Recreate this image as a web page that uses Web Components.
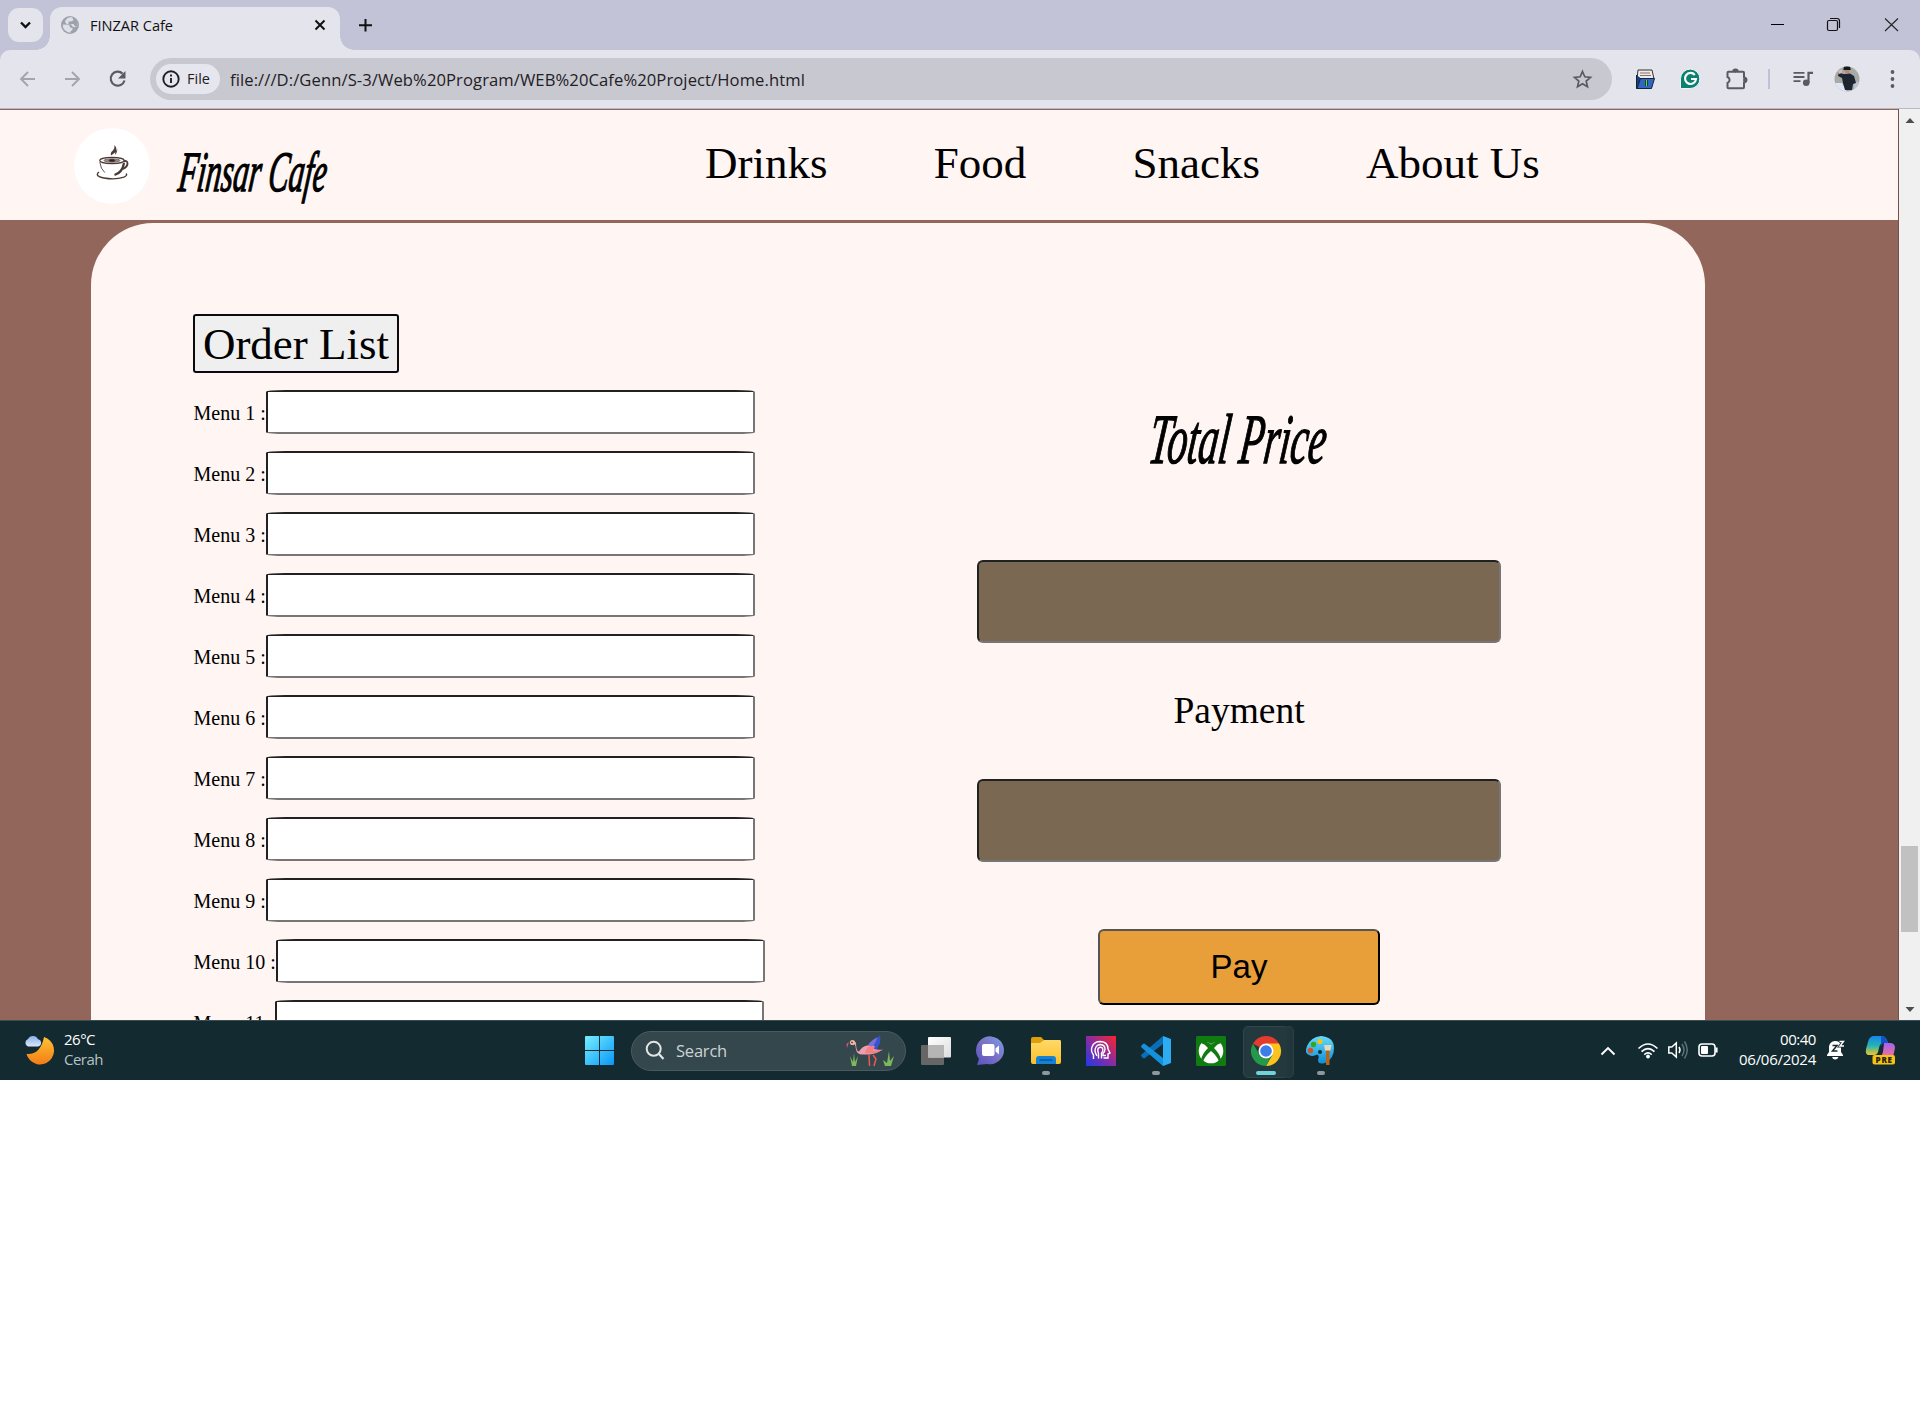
<!DOCTYPE html>
<html lang="id">
<head>
<meta charset="utf-8">
<title>FINZAR Cafe</title>
<style>
html,body{margin:0;background:#fff}
body{width:1920px;height:1411px;overflow:hidden;font-family:"Open Sans","Noto Sans",sans-serif}
</style>
</head>
<body>
<desk-screen></desk-screen>
<script>
const define=(name,css,html,ready)=>customElements.define(name,class extends HTMLElement{
  connectedCallback(){
    if(this.shadowRoot)return;
    const r=this.attachShadow({mode:'open'});
    r.innerHTML=`<style>:host{display:block;box-sizing:border-box}*{box-sizing:border-box}svg{display:block;flex:none;overflow:visible}${css}</style>${typeof html==='function'?html(this):html}`;
    if(ready)ready(this,r);
  }
});
// Icon with a viewBox in screen coordinates
const ic=(x,y,w,h,body,ml=0)=>`<svg width="${w}" height="${h}" viewBox="${x} ${y} ${w} ${h}" style="margin-left:${ml}px" fill="none">${body}</svg>`;

// Single line of text tracked to a given width
define('fit-text',`:host{display:block;flex:none;white-space:nowrap;width:var(--w)}span{display:inline-block}`,
  `<span><slot></slot></span>`,(el,r)=>{
    const w=+el.getAttribute('w'),s=r.querySelector('span');
    el.style.setProperty('--w',w+'px');
    const n=el.textContent.length,nat=s.getBoundingClientRect().width;
    s.style.letterSpacing=((w-nat)/n)+'px';
  });

define('script-title',`text{font-family:"Liberation Serif",serif;font-style:italic;font-weight:400;fill:#000;stroke:#000;stroke-width:1.3px}`,el=>{
  const w=+el.getAttribute('w'),h=+el.getAttribute('cap'),t=el.getAttribute('label');
  const fs=h/0.665;
  return `<svg width="${w}" height="${h}"><text transform="translate(0 ${h}) skewX(-7)" x="3" y="0" font-size="${fs}" textLength="${w-6}" lengthAdjust="spacingAndGlyphs">${t}</text></svg>`;
});

define('tab-strip',`
:host{height:50px;background:#c3c3d7;display:flex;align-items:flex-start;font-size:14.6px;color:#111}
.drop{margin:8px 0 0 8px;width:35px;height:34px;border-radius:11px;background:#e4e4ed}
.tab{position:relative;margin:7px 0 0 7px;width:290px;height:43px;background:#e4e4ed;border-radius:12px 12px 0 0;display:flex;align-items:center;padding-left:11px}
.tab:before,.tab:after{content:"";position:absolute;bottom:0;width:14px;height:14px}
.tab:before{left:-14px;background:radial-gradient(circle at 0 0,transparent 13.5px,#e4e4ed 14px)}
.tab:after{right:-14px;background:radial-gradient(circle at 100% 0,transparent 13.5px,#e4e4ed 14px)}
fit-text{margin:-7px 0 0 11px}.tab svg{margin-top:-7px}`,
`<div class="drop">${ic(8,8,35,34,'<path d="M21 22.5l4.5 4.5 4.5-4.5" stroke="#111" stroke-width="2.4"/>')}</div>
<div class="tab">${ic(61,16,18,18,'<circle cx="70" cy="25" r="9" fill="#9ba2ab"/><path d="M62.800 24.500l5 .3q2.500.5 2.500 3h2.200v2l-2 1.700v1.200a7.600 7.600 0 0 1-7.700-8.200M69 17.500q1.500-.6 3.200-.2l1.300 3-2.500 1.200h-2.500v2.500h5l1.500 2.500 2.500-.5q.3-2.500-1-4.800a8 8 0 0 1 .6 5q-2.600 1.800-4.600.3l-1.500-2.300h-4l-2-2.200q.5-3 4-4.500z" fill="#dedfe7"/>')}
<fit-text w="83">FINZAR Cafe</fit-text>${ic(315,20,10,10,'<path d="M315.500 20.500l9 9m0-9l-9 9" stroke="#111" stroke-width="2"/>',142)}</div>
${ic(352,0,500,50,'<path d="M365.500 19v12.500M359 25.300h13" stroke="#111" stroke-width="2"/>',12)}
${ic(1771,0,149,50,'<path d="M1771 24.500h13" stroke="#000"/><rect x="1827.500" y="20.500" width="10" height="10" rx="1.500" stroke="#111" stroke-width="1.200"/><path d="M1830 18.500h7a2.500 2.500 0 0 1 2.500 2.500v7" stroke="#111" stroke-width="1.200"/><path d="M1885 18.500l13 12.500m0-12.500l-13 12.500" stroke="#222" stroke-width="1.100"/>',919)}`);

define('tool-bar',`
:host{height:59px;background:#c3c3d7;color:#1f2023}
.bar{height:59px;background:#e4e4ed;border-radius:10px 10px 0 0;border-bottom:1px solid #b9b9c6;display:flex;align-items:center}
.omni{width:1462px;height:42px;border-radius:21px;background:#c8c8d1;display:flex;align-items:center;margin-left:24px;padding-left:6px}
.chip{width:64px;height:30px;border-radius:15px;background:#e6e6ef;display:flex;align-items:center;padding-left:6px}
.chip fit-text{font-size:14.5px;margin:-1px 0 0 7px}
.url{font-size:16.600px;margin-left:10px}`,
`<div class="bar">
${ic(20,71,15,16,'<path d="M35 79H21.500M28 72l-7 7 7 7" stroke="#a4a4ad" stroke-width="1.900"/>',20)}
${ic(65,71,15,16,'<path d="M65 79h13.500M72 72l7 7-7 7" stroke="#a4a4ad" stroke-width="1.900"/>',30)}
${ic(110,71,16,16,'<path d="M122.600 73.600a7 7 0 1 0 1.900 6.900" stroke="#5a5b60" stroke-width="2.200"/><path d="M125.500 71v7.500H118z" fill="#5a5b60"/>',30)}
<div class="omni"><div class="chip">${ic(162,70,18,18,'<circle cx="171" cy="79" r="7.700" stroke="#1f2023" stroke-width="1.900"/><path d="M171 78v5M171 74.500v2" stroke="#1f2023" stroke-width="1.900"/>')}<fit-text w="23">File</fit-text></div>
<fit-text class="url" w="575">file:///D:/Genn/S-3/Web%20Program/WEB%20Cafe%20Project/Home.html</fit-text>
${ic(1573,70,19,19,'<path d="M1582.500 71.500l2.300 5.300 5.700.5-4.300 3.800 1.300 5.600-5-3-5 3 1.300-5.600-4.300-3.800 5.700-.5z" stroke="#5a5b60" stroke-width="1.700"/>',768)}</div>
${ic(1635,69,20,21,'<path d="M1638 70h14l2 9h-17z" fill="#f3e9e5" stroke="#333"/><path d="M1640 73h10M1640 75.500h11" stroke="#777"/><path d="M1636.500 75v13.500h14l1-2" fill="#173f7c" stroke="#123"/><path d="M1640.500 78.500h14l-3 10h-14.500z" fill="#2e67bd" stroke="#14243c"/><path d="M1646.500 80v6" stroke="#0d1c22" stroke-width="3"/><path d="M1646.500 80v6" stroke="#5ddf63" stroke-width="1.400"/>',23)}
${ic(1680,70,20,20,'<path d="M1680.500 89.500v-10a9.700 9.700 0 1 1 9.700 10z" fill="#0b8270" stroke="#f4f4f8"/><path d="M1694.800 76a5.500 5.500 0 1 0 1.200 4h-5" stroke="#fff" stroke-width="2.200"/>',25)}
${ic(1726,68,21,21,'<path d="M1728.500 70.700h4.700a2.300 2.300 0 0 1 4.600 0h5.200q1 0 1 1v4.800a2.500 2.500 0 0 1 0 5v4.800q0 1-1 1h-14.500q-1 0-1-1v-4.300a3.200 3.200 0 0 0 0-6v-4.300q0-1 1-1z" stroke="#5a5b60" stroke-width="2"/><circle cx="1735.500" cy="70" r="2" fill="#5a5b60"/><circle cx="1745" cy="79" r="2" fill="#5a5b60"/>',26)}
${ic(1768,69,2,20,'<path d="M1769 69v20" stroke="#c0c0d6" stroke-width="2"/>',21)}
${ic(1793,70,20,17,'<path d="M1793.500 71.800h11M1793.500 76h11M1793.500 80.200h7" stroke="#5a5b60" stroke-width="1.800"/><circle cx="1806.200" cy="81.700" r="3.300" fill="#5a5b60"/><path d="M1808.500 82V71.800h4.500" stroke="#5a5b60" stroke-width="2.200"/>',23)}
${ic(1834,66,26,26,'<clipPath id="av"><circle cx="1847" cy="79" r="12.500"/></clipPath><g clip-path="url(#av)"><path d="M1834 66h26v26h-26z" fill="#a7aaa7"/><path d="M1834 83h8l5 9h-13z" fill="#dde6f2"/><path d="M1854 82h6v10h-6z" fill="#b9c4d4"/><path d="M1844 66h6l.8 4h-7.500z" fill="#171a1c"/><path d="M1844.500 70h5v3.500h-4z" fill="#b58b7a"/><path d="M1839 72l4 2 3 0 4-.5 4 2.500 2 7-3 1-1 6h-7l-2-7-1-5-4-2z" fill="#1d2630"/><path d="M1838 71l4-1.500v3.500l-3 1z" fill="#dbb9ae"/></g>',21)}
${ic(1890,69,6,20,'<g fill="#5a5b60"><circle cx="1892.500" cy="72" r="1.900"/><circle cx="1892.500" cy="79" r="1.900"/><circle cx="1892.500" cy="86" r="1.900"/></g>',30)}
</div>`);

define('site-header',`
:host{height:111px;background:#fff5f2;border-top:1px solid #92665a;display:flex;font:45px/52px "Liberation Serif",serif;color:#000}
.logo{margin:18px 0 0 74px;width:76px;height:76px;border-radius:50%;background:#fff}
script-title{margin:43px 0 0 24px}
nav{display:flex;gap:106.200px;margin:27px 0 0 377px}`,
`<div class="logo">${ic(74,128,76,76,`<g stroke="#4b3b38"><ellipse cx="112" cy="160.500" rx="12.300" ry="3.100" stroke-width="1.200"/><ellipse cx="112" cy="160.500" rx="8" ry="1.800" fill="#9b8d88" stroke-width=".6"/><ellipse cx="112" cy="160.500" rx="3" ry="1" fill="#2c1d1b"/><path d="M99.800 162q.8 7 5 10.500" stroke-width=".9"/><path d="M124 163q-1.500 9.500-9.500 12" stroke-width="2.300"/><path d="M123.500 161.500q4-1.500 4 2t-5 5.500" stroke-width="1.900"/><path d="M99 172q-5 4 5 6 11 2 20-.8 4-2 2-3.700" stroke-width="1.400"/></g><path d="M111 155.500q-1-3 2-5 2-2 1.500-5.500 4 4.500 0 8-2.500 1.500-3.500 2.500M115 155q2-2 2.500-6-3 3-2.500 6" fill="#4b3b38"/>`)}</div>
<script-title w="154" cap="38" label="Finsar Cafe"></script-title>
<nav><span>Drinks</span><span>Food</span><span>Snacks</span><span>About Us</span></nav>`);

define('menu-field',`:host{display:flex;height:61px;font:20px/23px "Liberation Serif",serif;color:#000}
span{padding-top:12px;white-space:nowrap;flex:none;margin-left:.5px}
input{width:489px;height:44px;flex:none;margin:0;border:2px solid #767676;border-color:#212121 #767676 #767676 #212121;border-radius:4%;background:#fff}`,
el=>`<span>Menu ${el.getAttribute('n')} :</span><input>`);

define('order-form',`
:host{width:600px;flex:none;padding:91px 0 0 102px}
button{display:block;width:206px;height:59px;border:2px solid #0b0b0d;border-radius:3px;background:#efefef;font:45px/52px "Liberation Serif",serif;color:#000;padding:0;margin:0 0 17px;white-space:nowrap}`,
`<button>Order List</button>`+[1,2,3,4,5,6,7,8,9,10,11].map(n=>`<menu-field n="${n}"></menu-field>`).join(''));

define('pay-form',`
:host{width:524px;flex:none;margin-left:286px;padding-top:193px;display:flex;flex-direction:column;align-items:center;color:#000}
script-title{margin-left:-7px}
input{display:block;width:524px;height:83px;border:2px solid #767676;border-color:#212121 #767676 #767676 #212121;border-radius:6px;background:#7a6852}
.a{margin-top:97px}.p{font:37.500px/42px "Liberation Serif",serif;margin:47px 0 47px}
button{width:282px;height:76px;margin-top:67px;border:2px solid #000;border-color:#555 #000 #000 #555;border-radius:6px;background:#e89e39;font:33px/38px "Liberation Sans",sans-serif;padding:0;color:#000}`,
`<script-title w="183" cap="47" label="Total Price"></script-title><input class="a"><div class="p">Payment</div><input><button>Pay</button>`);

define('scroll-bar',`:host{width:21px;height:911px;background:#f0f0f0;display:flex;flex-direction:column;align-items:center}
.t{width:17px;height:86px;background:#c1c1c1}`,
`${ic(1900,109,18,17,'<path d="M1904.500 123h9l-4.500-5z" fill="#4d4d4d"/>')}<div style="height:720px;flex:none"></div><div class="t"></div><div style="height:70px"></div>${ic(1900,1002,18,18,'<path d="M1904.500 1007h9l-4.500 5z" fill="#4d4d4d"/>')}`);

define('page-view',`:host{display:flex;height:911px;overflow:hidden}
main{width:1899px;height:911px;background:#92665a;overflow:hidden;border-right:1px solid #765048}
.panel{width:1614px;height:1100px;margin:3px 0 0 91px;background:#fff5f2;border-radius:62px 62px 0 0;display:flex;align-items:flex-start}
site-header{width:1898px}`,
`<main><site-header></site-header><div class="panel"><order-form></order-form><pay-form></pay-form></div></main><scroll-bar></scroll-bar>`);

define('task-app',`:host{width:55px;height:60px;display:flex;align-items:center;justify-content:center;position:relative}
i{position:absolute;bottom:6px;left:50%;width:8px;height:4px;border-radius:2px;margin-left:-4px;background:#8d999c}
:host([state=active]) i{width:20px;margin-left:-10px;background:#70d2db}
:host([state=active]):before{content:"";position:absolute;left:5px;top:5px;width:44px;height:50px;border-radius:5px;background:#24393e;border:1px solid #30464b}
:host([state=active]):after{content:"";position:absolute;left:49px;top:5px;width:6px;height:50px;border-radius:0 5px 5px 0;background:#20363b;border:1px solid #2b4045;border-left:0}
:host(:not([state])) i{display:none}::slotted(svg){position:relative;z-index:1}`,`<slot></slot><i></i>`);

define('task-bar',`
:host{height:60px;background:#132b30;border-top:1px solid #3a4d51;display:flex;align-items:center;color:#fff;font-size:15px;overflow:hidden}
svg{display:block;flex:none}
.w{margin:-4px 0 0 11px;line-height:20px}.w fit-text+fit-text{color:#b8c1c3}
.search{margin:0 2px 0 17px;width:275px;height:40px;border-radius:20px;background:#34474c;border:1px solid #4a5b5f;display:flex;align-items:center;padding-left:14px;font-size:16.500px;color:#cdd3d4}
.search fit-text{margin:0 0 0 12px}
.clock{margin:-4px 0 0 21px;width:77px;line-height:20px;display:flex;flex-direction:column;align-items:flex-end}
.tray{display:flex;align-items:center;margin-top:-1px}`,
`<svg width="30" height="30" viewBox="24 1033 30 30" style="margin:-4px 0 0 23px"><defs><linearGradient id="m" x2="0" y2="1"><stop stop-color="#fcc233"/><stop offset="1" stop-color="#f37d16"/></linearGradient><linearGradient id="c" x2="0" y2="1"><stop stop-color="#8ab0ee"/><stop offset="1" stop-color="#dce7fb"/></linearGradient></defs><path d="M45 1036a14 14 0 1 1-17.500 17q14 1 17.500-17z" fill="url(#m)"/><path d="M29 1045.500a4 4 0 0 1 0-7.500 5.500 5.500 0 0 1 10 .2 3.700 3.700 0 0 1 0 7.300z" fill="url(#c)"/></svg>
<div class="w"><fit-text w="31">26°C</fit-text><fit-text w="39">Cerah</fit-text></div>
<svg width="29" height="29" viewBox="0 0 29 29" style="margin-left:482px"><defs><linearGradient id="wn" gradientUnits="userSpaceOnUse" x2="29" y2="29"><stop stop-color="#76eeff"/><stop offset="1" stop-color="#0897f8"/></linearGradient></defs><path d="M1 0h13v14H0V1q0-1 1-1zM15 0h13q1 0 1 1v13H15zM0 15h14v14H1q-1 0-1-1zM15 15h14v13q0 1-1 1H15z" fill="url(#wn)"/></svg>
<div class="search">${ic(646,1041,18,19,'<circle cx="653.700" cy="1048.800" r="7" stroke="#e1e5e6" stroke-width="2"/><path d="M658.500 1053.500l5 5.500" stroke="#e1e5e6" stroke-width="2.200"/>')}
<fit-text w="51">Search</fit-text>
${ic(845,1035,50,33,'<path d="M851 1067l-2-10 3 6 1-9 1 9 3-6-2 10zM884 1067l-2-6 4 3 2-12 1 10 4-5-3 10z" fill="#7cb95b"/><path d="M866 1055q0-4 5-8l8-11q1 6-1 10l-3 6z" fill="#3554d1"/><path d="M877 1038q-10 4-12 13l4 3z" fill="#7a6fd8"/><path d="M855 1043.500q-4-3-6 0 6 0 6 7 1 5 6 5h8q7-1 13-5-6 1-10-1-2-3-6-3-5 1-8 6-3 0-3-9z" fill="#ee9dae"/><path d="M864 1054q2-9 10-7l-2 5 9-1q-7 5-17 3z" fill="#f07f86"/><path d="M848 1043l-2 6-.5-4z" fill="#e75278"/><circle cx="851.500" cy="1043.500" r="2.600" fill="#f1b5a1"/><circle cx="851" cy="1043.500" r=".8" fill="#222"/><path d="M868 1056l.5 11M872 1056l3 4-2 7" stroke="#ea5a50" stroke-width="1.500"/>',119)}</div>
<task-app><svg width="30" height="28" viewBox="921 1036 30 28"><defs><linearGradient id="tv" x2="1" y2="1"><stop stop-color="#fff"/><stop offset="1" stop-color="#ddd"/></linearGradient></defs><rect x="921" y="1044" width="23" height="20" rx="1" fill="#666"/><rect x="928" y="1036" width="23" height="20.500" rx="1" fill="url(#tv)"/><path d="M928 1044h16v12.500h-16z" fill="#b5b5b5"/></svg></task-app>
<task-app><svg width="29" height="29" viewBox="0 0 29 29"><defs><linearGradient id="ch" x1="1" x2="0" y2="1"><stop stop-color="#7ba0e6"/><stop offset=".5" stop-color="#7b70c5"/><stop offset="1" stop-color="#5751be"/></linearGradient></defs><path d="M1 29l2-6A14 14 0 1 1 11 28z" fill="url(#ch)"/><rect x="6" y="8" width="12.500" height="12" rx="2" fill="#fff"/><path d="M19.500 12.500l3.500-3v9l-3.500-3z" fill="#fff"/></svg></task-app>
<task-app state="open"><svg width="30" height="28" viewBox="0 0 30 28"><defs><linearGradient id="fo" x2="0" y2="1"><stop stop-color="#ffd969"/><stop offset="1" stop-color="#fcc028"/></linearGradient></defs><path d="M0 2q0-2 2-2h8l3 3-1 6H0z" fill="#df9f0b"/><path d="M0 6h9l4-3h16q1 0 1 2v20q0 2-2 2H2q-2 0-2-2z" fill="url(#fo)"/><path d="M5 27v-5q0-3 3-3h14q3 0 3 3v5z" fill="#1682d4"/><path d="M9 23h12" stroke="#0756a0" stroke-width="1.500" stroke-linecap="round"/></svg></task-app>
<task-app><svg width="30" height="30" viewBox="0 0 30 30"><defs><linearGradient id="hd" y1="1" x2="1" y2="0"><stop stop-color="#1f3ae8"/><stop offset=".5" stop-color="#8c2ba1"/><stop offset="1" stop-color="#fb252a"/></linearGradient></defs><path d="M0 0h30v30H0z" fill="url(#hd)"/><g fill="none" stroke="#fff" stroke-width="1.400"><path d="M7.500 23v-4q-3-4-1.500-8Q8 5.500 14.500 5.500 22 6 22 13l2 4-2 1v4h-4.500"/><path d="M11 20q-3-5-1.500-8 1.500-3.500 5-3.500 4.500.5 4.500 4.500 0 3-2 4.500v2h3"/><path d="M12.500 22.500v-5q-1.500-4 0-5.500 2-1.500 4 0 1 3-1 5v5.500"/></g></svg></task-app>
<task-app state="open"><svg width="30" height="30" viewBox="0 0 30 30"><path d="M22 0l8 3v24l-8 3z" fill="#2bacf3"/><path d="M22 0v8L4 22q-1 1-2 0l-1.500-1.500q-1-1 0-2z" fill="#0b6db6"/><path d="M22 30v-8L4 8Q3 7 2 8L.5 9.500q-1 1 0 2z" fill="#1591dc"/></svg></task-app>
<task-app><svg width="30" height="30" viewBox="0 0 30 30"><rect width="30" height="30" rx="1.500" fill="#107c10"/><circle cx="15" cy="15" r="12.300" fill="#fff"/><path d="M6 5.500q5-1 9 2.500 4-3.500 9-2.500l-1-2q-8-3-16 0zM15 8.500q-6-4.500-9-3.500l-1 2q4 1 7 5Q6 18 5 24l2 1.500Q9 20 15 15q6 5 8 10.500l2-1.500Q24 18 18 12q3-4 7-5l-1-2q-3-1-9 3.500" fill="#107c10"/></svg></task-app>
<task-app state="active"><svg width="30" height="30" viewBox="-15 -15 30 30"><path d="M0 0L-13-7.500A15 15 0 0 1 13-7.500z" fill="#e33b2e"/><path d="M0-7.500H13A15 15 0 0 1 0 15L6.500 3.750z" fill="#fcc31e"/><path d="M-13-7.500A15 15 0 0 0 0 15L6.500 3.750A7.500 7.500 0 0 1-6.500 3.750z" fill="#229a49"/><circle r="7.500" fill="#fff"/><circle r="5.800" fill="#3b7de9"/></svg></task-app>
<task-app state="open"><svg width="29" height="29" viewBox="0 0 29 29"><defs><linearGradient id="pt" x2="0" y2="1"><stop stop-color="#63dcfa"/><stop offset="1" stop-color="#118dd5"/></linearGradient></defs><path d="M15 0q13 1 13 12 0 11-9 15-7 2-7-3 2-6-2-5-4 2-7 0-5-2-2-9Q5 1 15 0z" fill="url(#pt)"/><circle cx="14" cy="5.500" r="2.600" fill="#fbc016"/><circle cx="7.500" cy="8.500" r="2.700" fill="#39a424"/><circle cx="4.500" cy="14.500" r="2.700" fill="#d5521e"/><circle cx="14" cy="16" r="2" fill="#102f3e"/><path d="M20 14h3.500v15H20z" fill="#b76419"/><path d="M18 9h7.500l-1 5.500h-5.500z" fill="#e7d7bd"/></svg></task-app>
<div class="tray">${ic(1601,1045,14,9,'<path d="M1601.500 1053.500l6.500-6.500 6.500 6.500" stroke="#fff" stroke-width="1.900"/>',253)}
${ic(1638,1041,20,17,'<g stroke="#fff" stroke-width="1.600"><path d="M1638.500 1047.500q9.500-9 19 0M1641.500 1050.700q6.500-6 13 0M1644.300 1053.600q3.700-3.300 7.400 0"/></g><circle cx="1648" cy="1055.500" r="1.900" fill="#fff"/>',23)}
${ic(1668,1041,20,18,'<path d="M1668.800 1047v6h3l4.500 4v-14l-4.500 4z" stroke="#fff" stroke-width="1.500"/><path d="M1679 1047q2 3 0 6" stroke="#fff" stroke-width="1.500"/><path d="M1682 1044q4 6 0 12M1684.500 1041.500q5.500 8.500 0 17" stroke="#60757a" stroke-width="1.400"/>',10)}
${ic(1698,1043,20,14,'<rect x="1699" y="1044" width="16" height="12" rx="3" stroke="#fff" stroke-width="1.600"/><rect x="1701" y="1046" width="7" height="8" rx="1" fill="#fff"/><path d="M1716.500 1047.500v5" stroke="#fff" stroke-width="2.200"/>',10)}</div>
<div class="clock"><fit-text w="36">00:40</fit-text><fit-text w="77">06/06/2024</fit-text></div>
<div class="tray">${ic(1827,1040,18,20,'<path d="M1827 1055l2-3v-5a6 6 0 0 1 6-6q5 0 6 4v7l2 3v1h-16zM1832 1057h6.500q-1 2.500-3.300 2.500t-3.200-2.500z" fill="#fff"/><path d="M1832.500 1045.500h4.500l-4.500 5.500h5" stroke="#132b30" stroke-width="1.500"/><path d="M1839.500 1041.500h4l-3.500 4.500h4" stroke="#132b30" stroke-width="3"/><path d="M1839.500 1041.500h4l-3.500 4.500h4" stroke="#fff" stroke-width="1.400"/>',11)}
<svg width="29" height="29" viewBox="0 0 29 29" style="margin-left:21px"><defs><linearGradient id="c1" x2="0" y2="1"><stop stop-color="#1785ee"/><stop offset=".5" stop-color="#21b4b4"/><stop offset="1" stop-color="#f1c82c"/></linearGradient><linearGradient id="c2" x2="0" y2="1"><stop stop-color="#a364ec"/><stop offset="1" stop-color="#f56e9c"/></linearGradient></defs><path d="M7 0h9q4 0 6 7h-5q-3 0-4 5l-1 4q-1 3-4 3H3q-4 0-3-6L2 6Q3 1 7 0z" fill="url(#c1)"/><path d="M18 7h6q5 0 5 5l-2 9H14q2-1 3-5z" fill="url(#c2)"/><path d="M15 0q4 0 5 3l2 4h-4q-2 0-3 4z" fill="#1550ca"/><rect x="6.500" y="19" width="22.500" height="9.500" rx="2" fill="#f8c30e"/><text x="9.500" y="26.700" font-family="Open Sans" font-weight="800" font-size="8" fill="#222" textLength="16.500">PRE</text></svg></div>`);

define('desk-screen',`:host{width:1920px}`,`<tab-strip></tab-strip><tool-bar></tool-bar><page-view></page-view><task-bar></task-bar>`);
</script>
</body>
</html>
